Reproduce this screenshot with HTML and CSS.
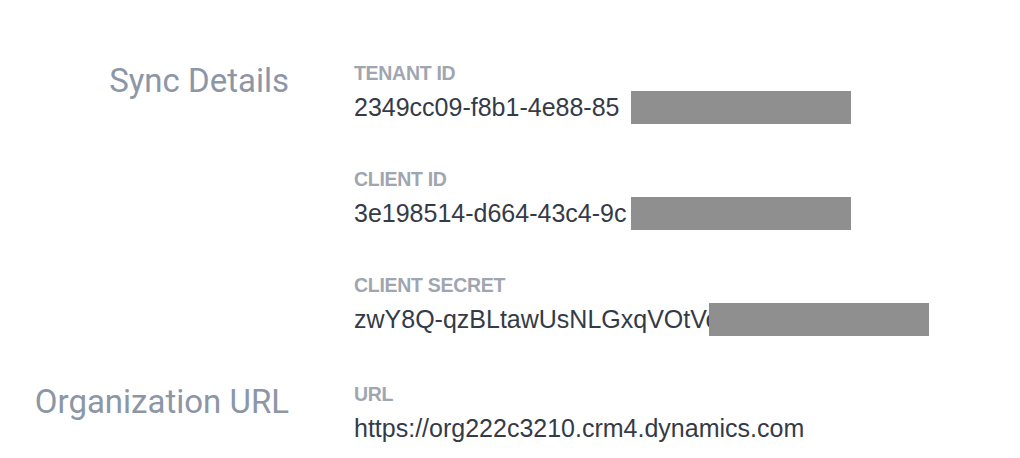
FILE: index.html
```html
<!DOCTYPE html>
<html lang="en">

<head>
    <meta charset="UTF-8">
    <meta name="viewport" content="width=device-width, initial-scale=1.0">
    <title>Sync Settings</title>
    <link rel="stylesheet" href="styles.css">
</head>

<body>
    <div class="settings">
        <section class="section">
            <h2 class="section-title">Sync Details</h2>
            <div class="fields">
                <div class="field">
                    <div class="field-label">TENANT ID</div>
                    <div class="field-value">2349cc09-f8b1-4e88-85<span class="redacted"></span></div>
                </div>
                <div class="field">
                    <div class="field-label">CLIENT ID</div>
                    <div class="field-value">3e198514-d664-43c4-9c<span class="redacted"></span></div>
                </div>
                <div class="field">
                    <div class="field-label">CLIENT SECRET</div>
                    <div class="field-value">zwY8Q-qzBLtawUsNLGxqVOtVo<span class="redacted redacted-long"></span></div>
                </div>
            </div>
        </section>

        <section class="section">
            <h2 class="section-title">Organization URL</h2>
            <div class="fields">
                <div class="field">
                    <div class="field-label">URL</div>
                    <div class="field-value">https://org222c3210.crm4.dynamics.com</div>
                </div>
            </div>
        </section>
    </div>
</body>

</html>
```

FILE: styles.css
```css
body {
    margin: 0;
    padding: 0;
    background-color: #fff;
    font-family: "Liberation Sans", Arial, sans-serif;
}

.settings {
    display: flex;
    flex-direction: column;
    gap: 47px;
    padding-top: 62px;
}

.section {
    display: grid;
    grid-template-columns: 289px 1fr;
    column-gap: 65px;
}

.section-title {
    margin: 0;
    padding-top: 1px;
    text-align: right;
    font-family: Roboto, "Liberation Sans", sans-serif;
    font-size: 33px;
    font-weight: 400;
    line-height: 36px;
    color: #8c96a6;
}

.fields {
    display: flex;
    flex-direction: column;
    gap: 44px;
}

.field-label {
    font-size: 19.5px;
    font-weight: 700;
    line-height: 22px;
    margin-bottom: 7px;
    color: #a0a6b0;
    letter-spacing: -0.3px;
}

.field-value {
    position: relative;
    font-size: 25px;
    line-height: 33px;
    color: #343b48;
    white-space: nowrap;
}

.redacted {
    position: absolute;
    top: 0;
    left: 277px;
    width: 220px;
    height: 33px;
    background-color: #8f8f8f;
}

.redacted-long {
    left: 355px;
}
```
